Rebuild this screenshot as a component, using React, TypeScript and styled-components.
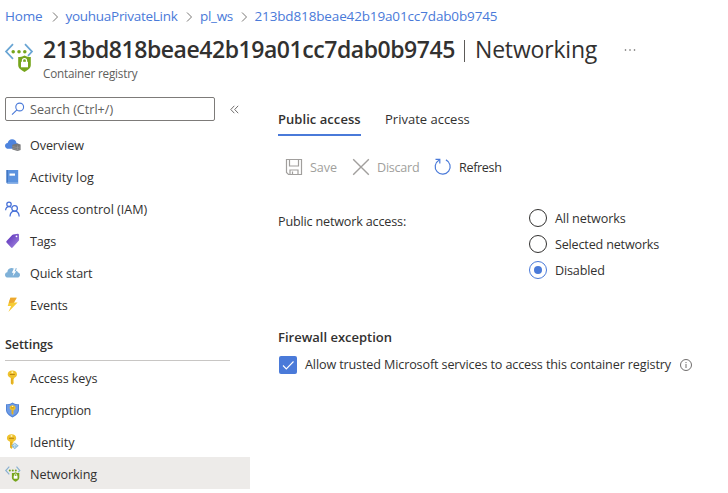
import React from "react";
import styled, { createGlobalStyle, css } from "styled-components";

const blue = "#4a7ad9";
const ink = "#323130";

const GlobalStyle = createGlobalStyle`
  * { box-sizing: border-box; }
  body {
    margin: 0;
    background: #fff;
    color: ${ink};
    font-family: "Open Sans", "Noto Sans", sans-serif;
    font-size: 12.6px;
    line-height: 18px;
  }
`;

const Page = styled.div`
  width: 728px;
  height: 493px;
  overflow: hidden;
  display: flex;
  flex-direction: column;
`;

const Label = styled.span<{ $track?: number }>`
  white-space: nowrap;
  letter-spacing: ${({ $track = 0 }) => $track}px;
`;

const Breadcrumb = styled.nav`
  display: flex;
  align-items: center;
  height: 32px;
  padding-left: 5px;
  font-size: 13.5px;
`;

const Crumb = styled(Label)<{ $width: number }>`
  width: ${({ $width }) => $width}px;
  color: ${blue};
`;

const CrumbArrow = styled.svg`
  width: 7px;
  height: 10px;
  margin: 2px 7px 0 8.5px;
`;

const Header = styled.header`
  display: flex;
  height: 56px;
  padding-left: 4px;
`;

const HeaderIcon = styled.div`
  width: 30px;
  height: 30px;
  margin: 11px 9px 0 0;
`;

const Heading = styled.div`
  display: flex;
  flex-direction: column;
`;

const TitleRow = styled.div`
  display: flex;
  align-items: center;
  height: 34px;
`;

const Title = styled.h1`
  margin: 0;
  display: flex;
  font-size: 23px;
  line-height: 34px;
  font-weight: 600;
`;

const TitleName = styled(Label)`
  width: 417px;
`;

const TitleSection = styled(Label)`
  font-weight: 400;
`;

const TitleBar = styled.span`
  width: 1px;
  height: 22px;
  margin: 8px 10px 0 4px;
  background: #5c5a58;
`;

const More = styled.svg`
  width: 13px;
  height: 4px;
  margin: 1px 0 0 27px;
`;

const Subtitle = styled(Label)`
  font-size: 11.7px;
  line-height: 15px;
  color: #605e5c;
`;

const Body = styled.div`
  display: flex;
  flex: 1;
`;

const Sidebar = styled.aside`
  width: 250px;
  padding-top: 9px;
  display: flex;
  flex-direction: column;
`;

const SearchRow = styled.div`
  display: flex;
  align-items: center;
  gap: 15px;
  padding-left: 5px;
  height: 24px;
  margin-bottom: 7px;
`;

const SearchBox = styled.div`
  display: flex;
  align-items: center;
  gap: 5px;
  width: 210px;
  height: 24px;
  padding-left: 5px;
  border: 1px solid #7d7b79;
  border-radius: 2px;
  color: #605e5c;
  ${Label} { padding-top: 1px; }
`;

const MenuRow = styled.a<{ $active?: boolean }>`
  display: flex;
  align-items: center;
  gap: 9px;
  height: 32px;
  padding: 2px 0 0 5px;
  ${({ $active }) => $active && css`background: #edebe9;`}
  ${Label} { padding-top: 2px; }
`;

const IconBox = styled.span<{ $size?: number }>`
  display: flex;
  flex: none;
  width: ${({ $size = 16 }) => $size}px;
  height: ${({ $size = 16 }) => $size}px;
  svg { width: 100%; height: 100%; overflow: visible; }
`;

const SectionTitle = styled.div`
  width: 225px;
  height: 33px;
  margin: 8px 0 0 5px;
  padding-top: 8px;
  font-weight: 600;
  border-bottom: 1px solid #c8c6c4;
`;

const Content = styled.main`
  flex: 1;
  padding: 19px 0 0 28px;
  display: flex;
  flex-direction: column;
`;

const Tabs = styled.div`
  display: flex;
  gap: 24px;
  height: 29px;
  font-size: 13px;
`;

const Tab = styled.div<{ $active?: boolean; $width: number }>`
  width: ${({ $width }) => $width}px;
  height: 29px;
  padding-top: 3px;
  border-bottom: 2px solid ${({ $active }) => ($active ? blue : "transparent")};
  font-weight: ${({ $active }) => ($active ? 600 : 400)};
`;

const Toolbar = styled.div`
  display: flex;
  height: 18px;
  margin: 22px 0 0 7px;
`;

const Command = styled.div<{ $disabled?: boolean; $width: number }>`
  display: flex;
  align-items: center;
  gap: 7px;
  width: ${({ $width }) => $width}px;
  color: ${({ $disabled }) => ($disabled ? "#a19f9d" : ink)};
  ${Label} { padding-top: 1px; }
`;

const AccessField = styled.div`
  display: grid;
  grid-template-columns: 251px auto;
  margin-top: 33px;
`;

const FieldLabel = styled.div`
  padding-top: 4px;
`;

const RadioList = styled.div`
  display: flex;
  flex-direction: column;
  gap: 8px;
`;

const RadioOption = styled.label`
  display: flex;
  align-items: center;
  gap: 8px;
  height: 18px;
  ${Label} { padding-top: 1px; }
`;

const RadioMark = styled.span<{ $checked?: boolean }>`
  display: flex;
  align-items: center;
  justify-content: center;
  width: 18px;
  height: 18px;
  border-radius: 50%;
  border: 1px solid ${({ $checked }) => ($checked ? blue : ink)};
  &::after {
    content: "";
    width: 8px;
    height: 8px;
    border-radius: 50%;
    background: ${({ $checked }) => ($checked ? blue : "transparent")};
  }
`;

const GroupTitle = styled.div`
  margin-top: 49px;
  font-size: 13px;
  font-weight: 600;
`;

const CheckRow = styled.label`
  display: flex;
  align-items: center;
  height: 18px;
  margin: 10px 0 0 1px;
`;

const CheckMark = styled.span`
  display: flex;
  width: 18px;
  height: 18px;
  margin-right: 8px;
  border-radius: 2px;
  background: ${blue};
`;

const CheckText = styled(Label)`
  width: 375px;
`;

const Stroke = ({ d, color, size = 16, width = 1 }: { d: string; color: string; size?: number; width?: number }) => (
  <svg viewBox={`0 0 ${size} ${size}`} width={size} height={size} fill="none" stroke={color} strokeWidth={width}>
    <path d={d} />
  </svg>
);

const NetworkIcon = () => (
  <svg viewBox="0 0 30 30">
    <path d="M9 1.2 2 8.6l7 7.2M21 1.2l7 7.4-4 4.3" fill="none" stroke="#69a5d4" strokeWidth="1.7" />
    <g fill="#76a51c"><circle cx="9.2" cy="8.7" r="1.75" /><circle cx="15" cy="8.7" r="1.75" /><circle cx="20.8" cy="8.7" r="1.75" /></g>
    <path d="M20.5 12.5c2 1.5 4 1.5 6.3 1.5v8c0 3.2-3 5.2-6.3 7-3.3-1.8-6.3-3.8-6.3-7v-8c2.300 0 4.300 0 6.300-1.500z" fill="#76a51c" />
    <path d="M17 18.800h7v5.500h-7z" fill="#fff" />
    <path d="M18.500 19.300v-1.700a2 2 0 0 1 4 0v1.700" fill="none" stroke="#fff" strokeWidth="1.300" />
  </svg>
);

const OverviewIcon = () => (
  <svg viewBox="0 0 16 16">
    <path d="M3.500 11.800C1.500 11.700 0 10.500 0 8.900c0-1.500 1-2.600 2.600-2.800C3.200 4 4.900 2.300 7 2.300c2.500 0 4.200 1.600 4.600 3.900 2 .2 3.400 1.400 3.400 3.100 0 1.500-1.200 2.500-2.800 2.500z" fill="#4d83dd" />
    <path d="M7.300 7.700 12 6.400l3.600 1.200v5.400l-3 1-5.300-1.500z" fill="#77787a" />
    <path d="m7.500 9.600 5 1 3-.8M7.500 11.500l5 1 3-.8M12.500 8.500v5" fill="none" stroke="#a2a3a5" strokeWidth=".5" />
  </svg>
);

const LogIcon = () => (
  <svg viewBox="0 0 16 16">
    <path d="M1.500 1h11.700v13.700H2.700c-.8 0-1.200-.5-1.200-1.200z" fill="#5b92de" />
    <path d="M1.500 1h1.300v13.200c-.8 0-1.300-.5-1.300-1.200z" fill="#3c70bd" />
    <path d="M2.300 13.900h10.900" stroke="#a9c5ed" strokeWidth=".7" />
    <path d="M4.500 4.500h5.500v2.200H4.500z" fill="#fff" />
  </svg>
);

const PeopleIcon = () => (
  <svg viewBox="0 0 16 16" fill="none" stroke="#4670d8" strokeWidth="1.250">
    <circle cx="4" cy="3.200" r="2.200" />
    <path d="M.6 9.300C.8 7 2 5.500 4 5.500c1 0 1.700.3 2.300.9" />
    <circle cx="9.600" cy="7.300" r="2.800" />
    <path d="M5 15.500c.2-3.300 1.900-5.300 4.600-5.300s4.400 2 4.600 5.300" />
  </svg>
);

const TagIcon = () => (
  <svg viewBox="0 0 16 16">
    <defs>
      <linearGradient id="tag" x1="0" y1="0" x2="1" y2="1"><stop offset="0" stopColor="#5528b8" /><stop offset="1" stopColor="#a78de0" /></linearGradient>
    </defs>
    <path d="m8.200 1.500 4.700-.8c.6 0 .9.300 1 .9l.2 4.900c0 .5-.1.800-.4 1.200L7.600 14.600c-.5.5-1 .5-1.500 0L1.500 9.400c-.4-.5-.4-1 .1-1.400l5.600-6c.3-.3.6-.4 1-.5z" fill="url(#tag)" />
    <circle cx="11.500" cy="3.300" r=".9" fill="#fff" />
  </svg>
);

const QuickIcon = () => (
  <svg viewBox="0 0 16 16">
    <path d="M3 12.500c-1.900 0-3-1.100-3-2.600 0-1.400.9-2.400 2.300-2.600C2.500 4.800 3.900 3.200 6.200 3c1.300-.1 2.300.4 3 .9l2.600-.9-.8 2.700c1.100.2 1.800.8 2 1.800 1.200.2 2 1.100 2 2.400 0 1.500-1.100 2.600-2.800 2.600z" fill="#7fb1d8" />
    <path d="m8.900 3.500-2.100 4.200h1.800L7.700 11.200l3.500-5H9.500L10.800 3.500z" fill="#fff" />
  </svg>
);

const BoltIcon = () => (
  <svg viewBox="0 0 16 16">
    <path d="M5.400.8h6.300L8.900 5.600h3.700L3.400 15l2.700-6H2.700z" fill="#f6cc35" />
    <path d="M5.400.8h6.300L8.900 5.600 3.700 6.300z" fill="#eda72f" />
  </svg>
);

const KeyShape = () => (
  <>
    <path d="M7.300.5c2.800 0 4.700 1.500 4.700 3.800 0 1.900-1.100 3.100-2.900 3.600v1.200l-1 .9 1 .9-1 1 1 .9-1.800 2.300L5.800 13.600V7.900C3.900 7.400 2.700 6.200 2.700 4.300 2.700 2 4.500.5 7.300.5z" fill="#efc22d" />
    <path d="M4.800 4.500h5" stroke="#b98210" strokeWidth="1" />
    <circle cx="7.300" cy="2.300" r="1" fill="#fff3b8" />
    <path d="M6.900 8.200v5.600" stroke="#d79b13" strokeWidth=".9" />
  </>
);

const KeyIcon = () => <svg viewBox="0 0 16 16"><KeyShape /></svg>;

const ShieldIcon = () => (
  <svg viewBox="0 0 16 16">
    <path d="M7.500.4c2.200 1.500 4.300 1.800 6.500 1.800v5.600c0 3.600-3 5.800-6.500 7.700C4 13.600 1 11.400 1 7.800V2.200C3.200 2.200 5.300 1.900 7.500.4z" fill="#4c80d5" />
    <path d="M7.500 1.500c1.800 1.100 3.700 1.500 5.600 1.600v4.700c0 3-2.600 5-5.600 6.600C4.500 12.800 1.900 10.800 1.900 7.800V3.100c1.900-.1 3.800-.5 5.600-1.600z" fill="#6e9be5" />
    <g transform="translate(2.900 3) scale(.64)"><KeyShape /></g>
  </svg>
);

const IdentityIcon = () => (
  <svg viewBox="0 0 16 16">
    <g transform="translate(-.8 -.2)"><KeyShape /></g>
    <path d="m9.700 8.500 4 3.300-4 3.500-3.500-3.500z" fill="#8dbcda" />
    <path d="m9.700 9.500.1 4.500m-2-2 2-1.800 2 1.800" fill="none" stroke="#d9edf7" strokeWidth=".8" />
  </svg>
);

const SmallNetworkIcon = () => (
  <svg viewBox="0 0 16 16">
    <path d="M4.300.7.8 4.500l3.500 3.800M11.500.7l3.300 3.800-1.500 1.700" fill="none" stroke="#8ab2d2" strokeWidth="1.200" />
    <g fill="#76a51c"><circle cx="4.800" cy="4.600" r="1" /><circle cx="7.800" cy="4.600" r="1" /><circle cx="10.800" cy="4.600" r="1" /></g>
    <path d="M10.600 6.200c1.200.8 2.400.9 3.700.9v4.700c0 1.900-1.800 2.900-3.700 3.900-1.900-1-3.700-2-3.700-3.900V7.100c1.300 0 2.500-.1 3.700-.9z" fill="#76a51c" />
    <path d="M8.700 9.800h3.800v2.900H8.700z" fill="#fff" />
    <path d="M9.500 10V9a1.100 1.100 0 0 1 2.200 0v1" fill="none" stroke="#fff" strokeWidth=".7" />
  </svg>
);

const SearchIcon = () => (
  <svg viewBox="0 0 14 14" fill="none" stroke={blue} strokeWidth="1.100">
    <circle cx="8.700" cy="5" r="3.900" /><path d="M5.900 7.800 1 12.700" />
  </svg>
);

const RefreshIcon = () => (
  <svg viewBox="0 0 18 18" fill="none" stroke={blue} strokeWidth="1.200">
    <path d="M11.900 1.900A7.500 7.500 0 1 1 4.900 2.200M1.500 1.300h4.300v4.200" />
  </svg>
);

const InfoIcon = () => (
  <svg viewBox="0 0 12 12" fill="none" stroke="#605e5c" strokeWidth=".9">
    <circle cx="6" cy="6" r="5.500" /><path d="M6 5v4M6 3v1.100" />
  </svg>
);

type Item = { label: string; icon: React.FC; track?: number; active?: boolean };

const mainItems: Item[] = [
  { label: "Overview", icon: OverviewIcon, track: -0.1 },
  { label: "Activity log", icon: LogIcon, track: 0.1 },
  { label: "Access control (IAM)", icon: PeopleIcon, track: -0.02 },
  { label: "Tags", icon: TagIcon, track: -0.2 },
  { label: "Quick start", icon: QuickIcon, track: -0.12 },
  { label: "Events", icon: BoltIcon, track: -0.15 },
];

const settingsItems: Item[] = [
  { label: "Access keys", icon: KeyIcon, track: -0.08 },
  { label: "Encryption", icon: ShieldIcon, track: -0.18 },
  { label: "Identity", icon: IdentityIcon, track: 0 },
  { label: "Networking", icon: SmallNetworkIcon, active: true, track: -0.08 },
];

const Menu = ({ items }: { items: Item[] }) => (
  <>
    {items.map(({ label, icon: Icon, track, active }) => (
      <MenuRow key={label} $active={active}>
        <IconBox><Icon /></IconBox>
        <Label $track={track}>{label}</Label>
      </MenuRow>
    ))}
  </>
);

const Arrow = () => (
  <CrumbArrow viewBox="0 0 7 10" fill="none" stroke="#797775"><path d="m1 .5 4.500 4.500L1 9.500" /></CrumbArrow>
);

const registry = "213bd818beae42b19a01cc7dab0b9745";

export default function App() {
  return (
    <Page>
      <GlobalStyle />
      <Breadcrumb>
        <Crumb $width={38} $track={-0.2}>Home</Crumb>
        <Arrow />
        <Crumb $width={112} $track={-0.28}>youhuaPrivateLink</Crumb>
        <Arrow />
        <Crumb $width={32} $track={-0.3}>pl_ws</Crumb>
        <Arrow />
        <Crumb $width={244} $track={-0.14}>{registry}</Crumb>
      </Breadcrumb>
      <Header>
        <HeaderIcon><NetworkIcon /></HeaderIcon>
        <Heading>
          <TitleRow>
            <Title>
              <TitleName $track={-0.45}>{registry}</TitleName>
              <TitleBar />
              <TitleSection $track={-0.18}>Networking</TitleSection>
            </Title>
            <More viewBox="0 0 13 4" fill="#605e5c">
              <circle cx="1.500" cy="2" r=".8" /><circle cx="6" cy="2" r=".8" /><circle cx="10.500" cy="2" r=".8" />
            </More>
          </TitleRow>
          <Subtitle $track={-0.18}>Container registry</Subtitle>
        </Heading>
      </Header>
      <Body>
        <Sidebar>
          <SearchRow>
            <SearchBox>
              <IconBox $size={14}><SearchIcon /></IconBox>
              <Label>Search (Ctrl+/)</Label>
            </SearchBox>
            <IconBox $size={9}><Stroke size={9} color="#605e5c" width={0.9} d="M4.300.8.8 4.500l3.500 3.700M8.200.8 4.700 4.500l3.500 3.700" /></IconBox>
          </SearchRow>
          <Menu items={mainItems} />
          <SectionTitle><Label $track={-0.1}>Settings</Label></SectionTitle>
          <Menu items={settingsItems} />
        </Sidebar>
        <Content>
          <Tabs>
            <Tab $active $width={83}><Label $track={0.05}>Public access</Label></Tab>
            <Tab $width={86}><Label>Private access</Label></Tab>
          </Tabs>
          <Toolbar>
            <Command $disabled $width={67}>
              <IconBox $size={18}><Stroke size={18} color="#a19f9d" width={1.2} d="M1.500 1.500h15v15h-13l-2-2zM4.500 1.500v6.500h9V1.500M5 16.500V12h8v4.500M7.500 13.500v3" /></IconBox>
              <Label $track={-0.1}>Save</Label>
            </Command>
            <Command $disabled $width={82}>
              <IconBox $size={18}><Stroke size={18} color="#a19f9d" width={1.4} d="m1.200 1.200 15.600 15.600M16.800 1.200 1.200 16.800" /></IconBox>
              <Label $track={-0.25}>Discard</Label>
            </Command>
            <Command $width={70}>
              <IconBox $size={18}><RefreshIcon /></IconBox>
              <Label $track={-0.35}>Refresh</Label>
            </Command>
          </Toolbar>
          <AccessField>
            <FieldLabel><Label $track={-0.17}>Public network access:</Label></FieldLabel>
            <RadioList>
              <RadioOption><RadioMark /><Label $track={-0.12}>All networks</Label></RadioOption>
              <RadioOption><RadioMark /><Label $track={-0.18}>Selected networks</Label></RadioOption>
              <RadioOption><RadioMark $checked /><Label $track={-0.15}>Disabled</Label></RadioOption>
            </RadioList>
          </AccessField>
          <GroupTitle><Label>Firewall exception</Label></GroupTitle>
          <CheckRow>
            <CheckMark><Stroke size={18} color="#fff" width={1.1} d="m4 9.500 3.300 3.500L14.500 5.500" /></CheckMark>
            <CheckText $track={-0.13}>Allow trusted Microsoft services to access this container registry</CheckText>
            <IconBox $size={12}><InfoIcon /></IconBox>
          </CheckRow>
        </Content>
      </Body>
    </Page>
  );
}
